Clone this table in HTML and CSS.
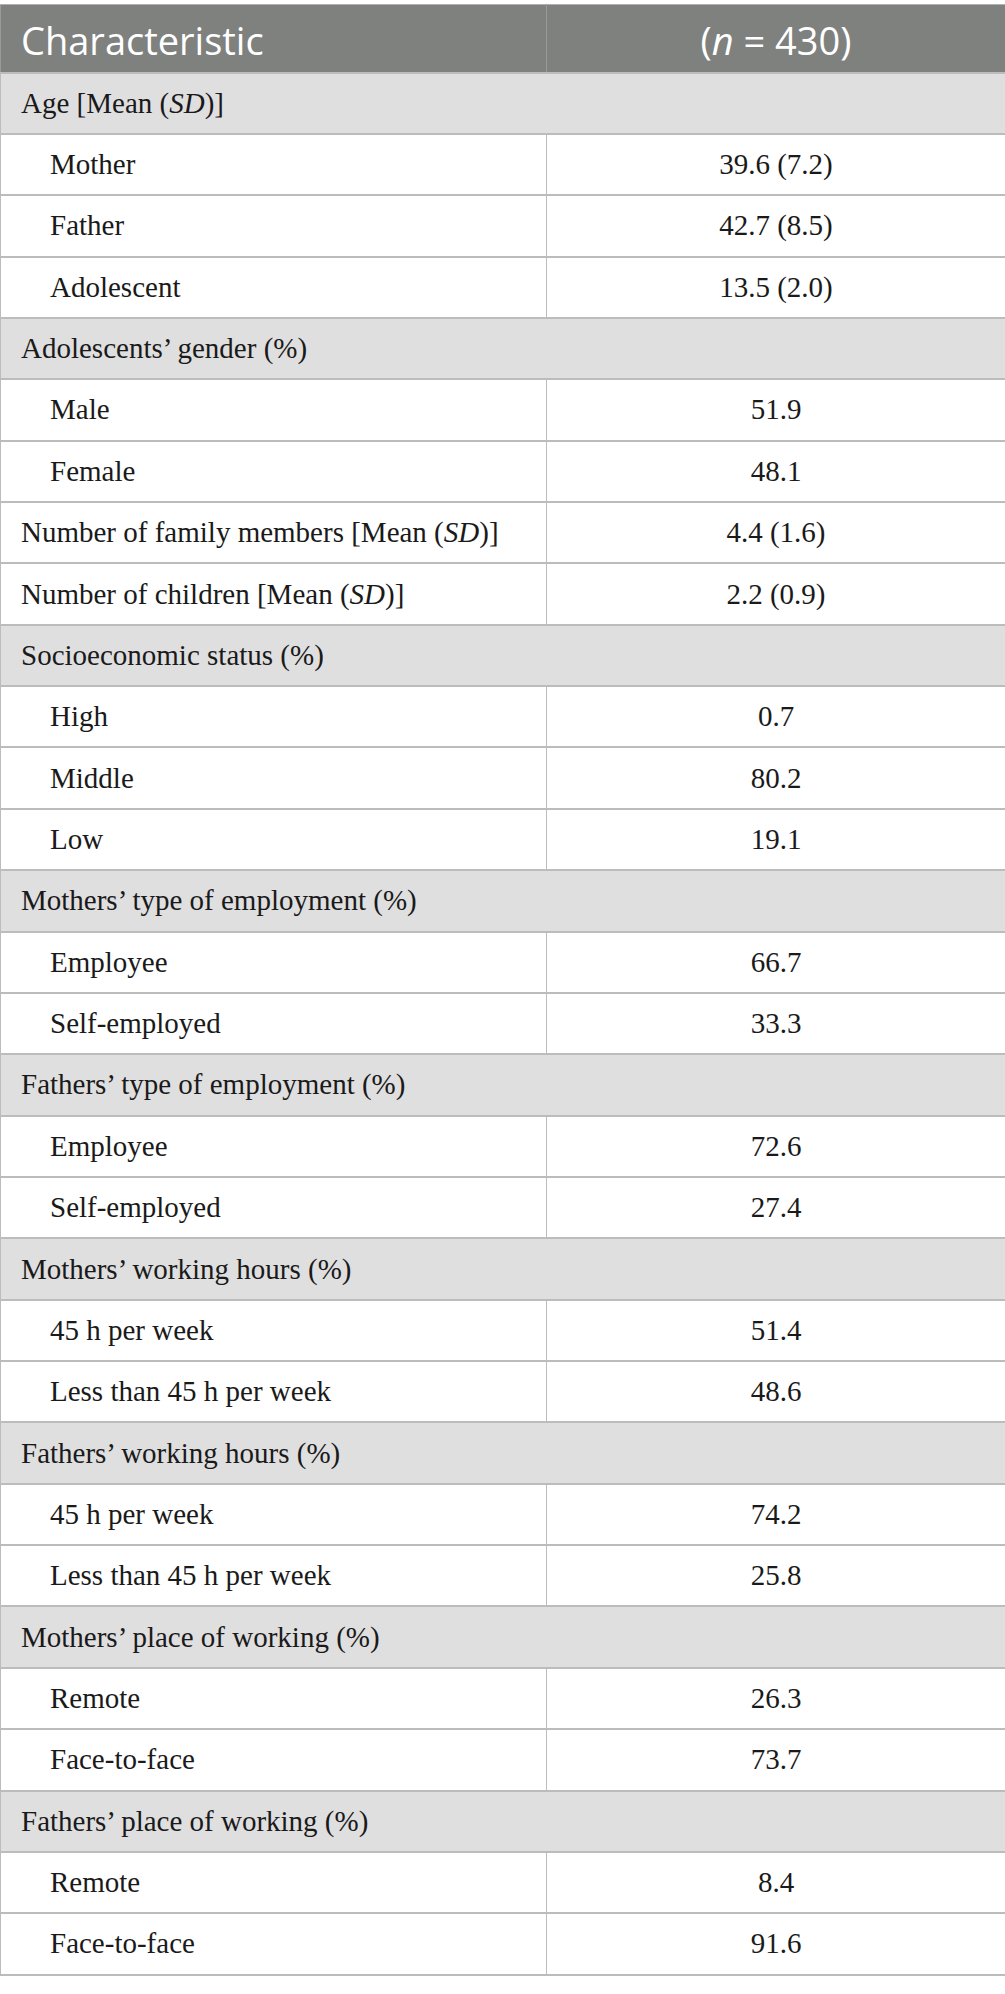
FILE: index.html
```html
<!DOCTYPE html>
<html lang="en">
<head>
    <meta charset="UTF-8">
    <title>Sample characteristics</title>
    <link rel="stylesheet" href="styles.css">
</head>
<body>
    <table class="data-table">
        <colgroup>
            <col class="col-label">
            <col class="col-value">
        </colgroup>
        <thead>
            <tr>
                <th class="head-label">Characteristic</th>
                <th class="head-value">(<i>n</i> = 430)</th>
            </tr>
        </thead>
        <tbody>
            <tr class="group"><td colspan="2">Age [Mean (<i>SD</i>)]</td></tr>
            <tr><td class="sub">Mother</td><td class="val">39.6 (7.2)</td></tr>
            <tr><td class="sub">Father</td><td class="val">42.7 (8.5)</td></tr>
            <tr><td class="sub">Adolescent</td><td class="val">13.5 (2.0)</td></tr>

            <tr class="group"><td colspan="2">Adolescents’ gender (%)</td></tr>
            <tr><td class="sub">Male</td><td class="val">51.9</td></tr>
            <tr><td class="sub">Female</td><td class="val">48.1</td></tr>

            <tr><td>Number of family members [Mean (<i>SD</i>)]</td><td class="val">4.4 (1.6)</td></tr>
            <tr><td>Number of children [Mean (<i>SD</i>)]</td><td class="val">2.2 (0.9)</td></tr>

            <tr class="group"><td colspan="2">Socioeconomic status (%)</td></tr>
            <tr><td class="sub">High</td><td class="val">0.7</td></tr>
            <tr><td class="sub">Middle</td><td class="val">80.2</td></tr>
            <tr><td class="sub">Low</td><td class="val">19.1</td></tr>

            <tr class="group"><td colspan="2">Mothers’ type of employment (%)</td></tr>
            <tr><td class="sub">Employee</td><td class="val">66.7</td></tr>
            <tr><td class="sub">Self-employed</td><td class="val">33.3</td></tr>

            <tr class="group"><td colspan="2">Fathers’ type of employment (%)</td></tr>
            <tr><td class="sub">Employee</td><td class="val">72.6</td></tr>
            <tr><td class="sub">Self-employed</td><td class="val">27.4</td></tr>

            <tr class="group"><td colspan="2">Mothers’ working hours (%)</td></tr>
            <tr><td class="sub">45 h per week</td><td class="val">51.4</td></tr>
            <tr><td class="sub">Less than 45 h per week</td><td class="val">48.6</td></tr>

            <tr class="group"><td colspan="2">Fathers’ working hours (%)</td></tr>
            <tr><td class="sub">45 h per week</td><td class="val">74.2</td></tr>
            <tr><td class="sub">Less than 45 h per week</td><td class="val">25.8</td></tr>

            <tr class="group"><td colspan="2">Mothers’ place of working (%)</td></tr>
            <tr><td class="sub">Remote</td><td class="val">26.3</td></tr>
            <tr><td class="sub">Face-to-face</td><td class="val">73.7</td></tr>

            <tr class="group"><td colspan="2">Fathers’ place of working (%)</td></tr>
            <tr><td class="sub">Remote</td><td class="val">8.4</td></tr>
            <tr><td class="sub">Face-to-face</td><td class="val">91.6</td></tr>
        </tbody>
    </table>
</body>
</html>
```

FILE: styles.css
```css
body {
    margin: 0;
    padding: 4px 0 0 0;
    background: #ffffff;
}

.data-table {
    width: 1005px;
    table-layout: fixed;
    border-collapse: collapse;
    font-family: "Liberation Serif", "Times New Roman", serif;
    font-size: 29px;
    color: #1a1a1a;
}

.col-label {
    width: 546px;
}

.col-value {
    width: 459px;
}

th {
    height: 68px;
    padding: 4px 20px 0 20px;
    box-sizing: border-box;
    background-color: #7f817f;
    color: #ffffff;
    font-family: "Open Sans", sans-serif;
    font-weight: 400;
    font-size: 38px;
    border-top: 1px solid #b0b0b0;
    border-left: 1px solid #9a9a9a;
    border-right: 1px solid #9a9a9a;
}

.head-label {
    text-align: left;
}

.head-value {
    text-align: center;
}

td {
    height: 61.37px;
    padding: 0 20px;
    box-sizing: border-box;
    border-top: 2px solid #bcbcbc;
    border-bottom: 2px solid #bcbcbc;
    border-left: 1px solid #bcbcbc;
    border-right: 1px solid #bcbcbc;
    text-align: left;
    vertical-align: middle;
}

td.sub {
    padding-left: 49px;
}

td.val {
    text-align: center;
}

.group td {
    background-color: #e0dfe0;
}
```
